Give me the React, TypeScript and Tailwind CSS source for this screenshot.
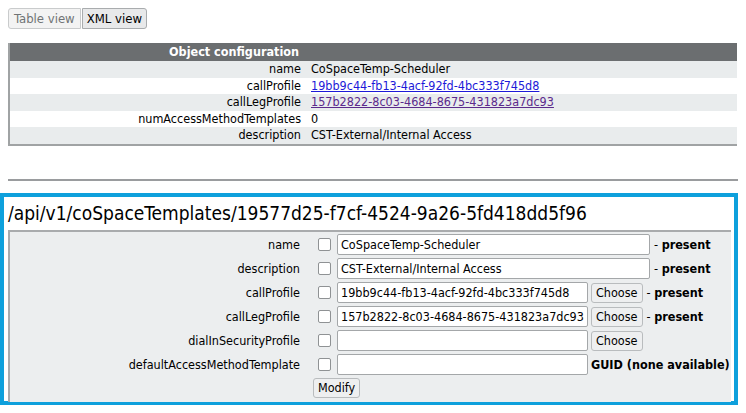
import React from "react";

const font = { fontFamily: '"DejaVu Sans Condensed", "DejaVu Sans", Tahoma, sans-serif' };

const config: { label: string; value: string; link?: "blue" | "purple" }[] = [
  { label: "name", value: "CoSpaceTemp-Scheduler" },
  { label: "callProfile", value: "19bb9c44-fb13-4acf-92fd-4bc333f745d8", link: "blue" },
  { label: "callLegProfile", value: "157b2822-8c03-4684-8675-431823a7dc93", link: "purple" },
  { label: "numAccessMethodTemplates", value: "0" },
  { label: "description", value: "CST-External/Internal Access" },
];

type Field = {
  label: string;
  value: string;
  wide?: boolean;
  choose?: boolean;
  note?: string;
};

const fields: Field[] = [
  { label: "name", value: "CoSpaceTemp-Scheduler", wide: true, note: "present" },
  { label: "description", value: "CST-External/Internal Access", wide: true, note: "present" },
  { label: "callProfile", value: "19bb9c44-fb13-4acf-92fd-4bc333f745d8", choose: true, note: "present" },
  { label: "callLegProfile", value: "157b2822-8c03-4684-8675-431823a7dc93", choose: true, note: "present" },
  { label: "dialInSecurityProfile", value: "", choose: true },
  { label: "defaultAccessMethodTemplate", value: "" },
];

function SmallButton({ children }: { children: React.ReactNode }) {
  return (
    <button className="h-[20px] rounded-[3px] border border-[#b9bcbe] bg-[#eeeff0] px-[4px] text-[12.5px] leading-none text-black">
      {children}
    </button>
  );
}

export default function App() {
  return (
    <div className="h-[413px] w-[746px] overflow-hidden bg-white text-[12px] text-black" style={font}>
      <div className="flex px-[8px] pt-[8px]">
        <button className="h-[21px] rounded-l-[3px] border border-[#c9cbcc] bg-[#f3f3f3] px-[5px] text-[13px] text-[#707375]">
          Table view
        </button>
        <button className="ml-[1px] h-[21px] rounded-r-[3px] border border-[#a9acae] bg-[#e8e9ea] px-[4px] text-[13px] text-black">
          XML view
        </button>
      </div>

      <table className="ml-[8px] mt-[14px] w-[729px] border-collapse border-b-2 border-l-2 border-[#a0a3a4]">
        <thead>
          <tr className="h-[18px] bg-[#6b6e70] text-white">
            <th className="w-[297px] pr-[7px] text-right text-[12.5px] font-bold leading-[18px]">
              Object configuration
            </th>
            <th />
          </tr>
        </thead>
        <tbody>
          {config.map((r, i) => (
            <tr key={r.label} className={`h-[16.6px] ${i % 2 === 0 ? "bg-[#e9eced]" : "bg-white"}`}>
              <td className="pr-[5px] text-right text-[12.5px] leading-[16.6px]">{r.label}</td>
              <td className="pl-[5px] text-[12.5px] leading-[16.6px]">
                {r.link ? (
                  <a className={`underline ${r.link === "blue" ? "text-[#1d1ad8]" : "text-[#5b2a8c]"}`}>{r.value}</a>
                ) : (
                  r.value
                )}
              </td>
            </tr>
          ))}
        </tbody>
      </table>

      <div className="mx-[8px] mt-[33px] h-[2px] bg-[#9a9c9e]" />

      <div className="mt-[12px] h-[212px] w-[738px] border-[4px] border-[#0ea0dc] bg-white pl-[4px] pr-[3px]">
        <div className="pt-[4px] text-[19px] leading-[24px] text-black">
          /api/v1/coSpaceTemplates/19577d25-f7cf-4524-9a26-5fd418dd5f96
        </div>
        <div className="mt-[5px] h-[172px] w-[723px] border-l-2 border-t-2 border-[#a9abad] bg-[#eceeef] pt-[1px]">
          {fields.map((f) => (
            <div key={f.label} className="flex h-[24px] items-center">
              <div className="w-[290px] text-right text-[12.5px]">{f.label}</div>
              <span className="ml-[18px] h-[13px] w-[13px] rounded-[2px] border border-[#8f9294] bg-white" />
              <input
                readOnly
                value={f.value}
                className={`ml-[6px] h-[21px] rounded-[2px] border border-[#a4a7a9] bg-white px-[3px] text-[12.5px] text-black outline-none ${
                  f.wide ? "w-[313px]" : "w-[251px]"
                }`}
                style={font}
              />
              {f.choose && (
                <span className="ml-[3px]">
                  <SmallButton>Choose</SmallButton>
                </span>
              )}
              {f.note && (
                <span className="ml-[4px] text-[12.5px]">
                  - <b>{f.note}</b>
                </span>
              )}
              {!f.choose && !f.wide && <b className="ml-[3px] text-[12.5px]">GUID (none available)</b>}
            </div>
          ))}
          <div className="flex h-[22px] items-center pl-[303px]">
            <SmallButton>Modify</SmallButton>
          </div>
        </div>
      </div>
    </div>
  );
}
